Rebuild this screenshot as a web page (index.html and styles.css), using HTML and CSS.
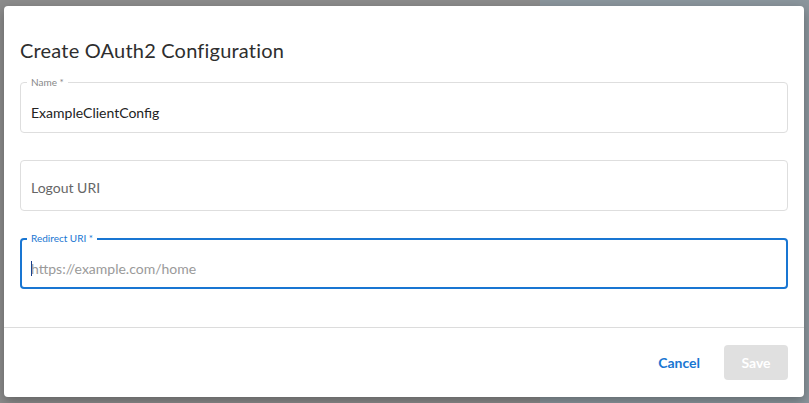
FILE: index.html
```html
<!DOCTYPE html>
<html>
<head>
<meta charset="utf-8">
<link rel="stylesheet" href="styles.css">
</head>
<body>
<div class="backdrop">
  <div class="dialog">
    <h2 class="title">Create OAuth2 Configuration</h2>
    <div class="fields">
      <div class="field">
        <span class="legend">Name *</span>
        <span class="value">ExampleClientConfig</span>
      </div>
      <div class="field plain">
        <span class="placeholder-label">Logout URI</span>
      </div>
      <div class="field focused">
        <span class="legend">Redirect URI *</span>
        <span class="caret"></span><span class="placeholder">https://example.com/home</span>
      </div>
    </div>
    <div class="footer">
      <button class="btn cancel">Cancel</button>
      <button class="btn save">Save</button>
    </div>
  </div>
</div>
</body>
</html>
```
FILE: styles.css
```css
* { box-sizing: border-box; }
html, body { margin: 0; padding: 0; }
body {
  width: 809px;
  height: 403px;
  overflow: hidden;
  font-family: Lato, "Open Sans", sans-serif;
}
.backdrop {
  width: 809px;
  height: 403px;
  background: linear-gradient(to right, #8c8c8c 0, #8c8c8c 540px, #8b969d 540px);
  padding: 6px 5px 6px 4px;
}
.dialog {
  width: 800px;
  height: 391px;
  background: #fff;
  border-radius: 4px;
  box-shadow: 0 4px 12px rgba(0,0,0,0.3);
  display: flex;
  flex-direction: column;
}
.title {
  margin: 0;
  padding: 32px 16px 0 16px;
  font-size: 20px;
  line-height: 24px;
  font-weight: 400;
  color: #2e2e2e;
  letter-spacing: 0.2px;
}
.fields {
  padding: 20px 16px 0 16px;
  display: flex;
  flex-direction: column;
  gap: 27px;
  height: 266px;
  border-bottom: 1px solid #dcdcdc;
}
.field {
  position: relative;
  flex: none;
  height: 51px;
  border: 1px solid #dedede;
  border-radius: 4px;
  display: flex;
  align-items: center;
  padding: 10px 10px 0 10px;
  font-size: 14px;
}
.field.plain { padding-top: 3px; }
.field.focused {
  border: 2px solid #1976d2;
  padding-left: 9px;
  padding-top: 9px;
}
.legend {
  position: absolute;
  top: -8px;
  left: 6px;
  padding: 0 4px;
  background: #fff;
  font-size: 10px;
  line-height: 14px;
  color: #888;
}
.focused .legend {
  color: #1976d2;
  top: -9px;
  left: 5px;
}
.value { color: #222; }
.placeholder-label { color: #666; }
.placeholder { color: #9a9a9a; }
.caret {
  display: inline-block;
  width: 1px;
  height: 15px;
  background: #1a3c8a;
  margin-right: -1px;
}
.footer {
  flex: 1;
  display: flex;
  justify-content: flex-end;
  align-items: center;
  gap: 24px;
  padding: 0 16px 0 0;
}
.btn {
  font-family: Lato, "Open Sans", sans-serif;
  font-size: 14px;
  font-weight: 700;
  border: none;
  border-radius: 4px;
  background: transparent;
  cursor: pointer;
}
.cancel {
  color: #1976d2;
  padding: 0;
}
.save {
  width: 64px;
  height: 35px;
  background: #e0e0e0;
  color: #fff;
}
```
